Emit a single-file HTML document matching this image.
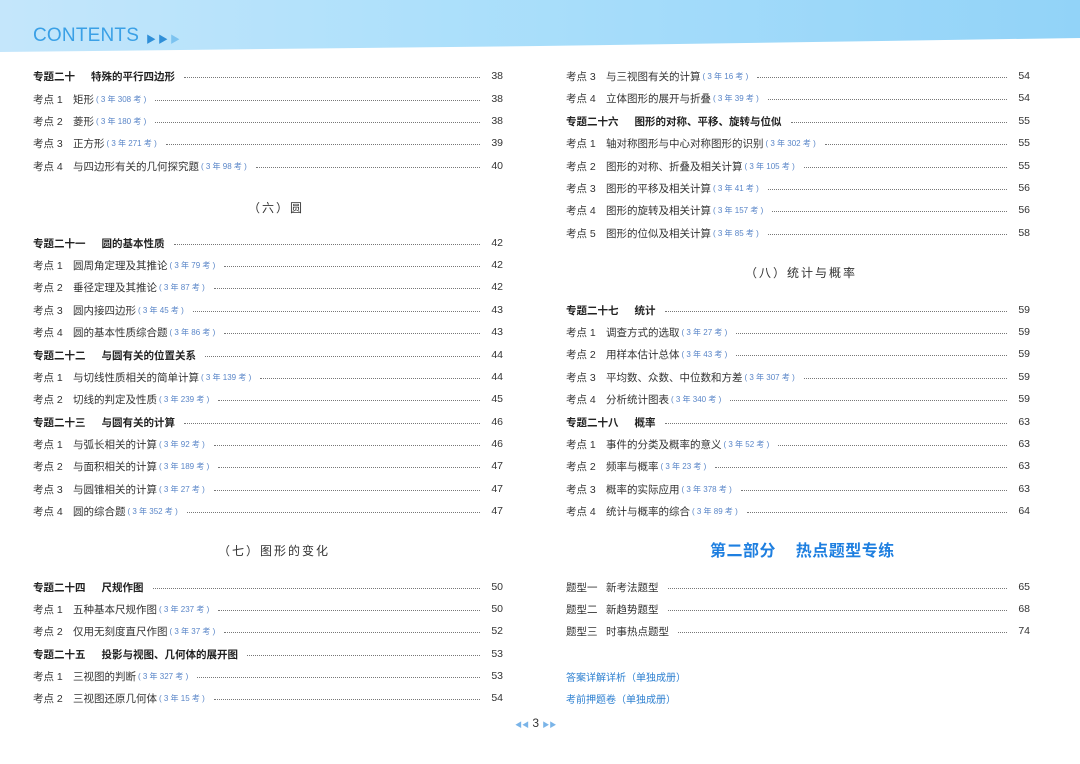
<!DOCTYPE html>
<html><head><meta charset="utf-8"><style>
body{margin:0;width:1080px;height:764px;background:#fff;position:relative;overflow:hidden;font-family:"Liberation Sans","Noto Sans CJK SC",sans-serif;color:#333}
.hdr{position:absolute;left:0;top:0;width:1080px;height:52px;background:linear-gradient(90deg,#c4e6fb 0%,#ade0fb 40%,#92d3f8 100%);clip-path:polygon(0 0,1080px 0,1080px 38px,540px 46px,0 52px)}
.ct{position:absolute;left:33px;top:25px;font-size:19px;color:#3aa0e6;letter-spacing:0.2px}
.ar{position:absolute;top:31px;font-size:10px;color:#2f8fd8}
.r{position:absolute;height:16px;display:flex;align-items:center;font-size:10.5px;white-space:nowrap}
.r b{font-weight:bold;color:#222}
.r .k{display:inline-block;width:40px}
.r .kb{display:inline-block;margin-right:16px;font-weight:bold;color:#222}
.n{color:#5a86c8;font-size:8px;margin-left:2px}
.d{flex:1;border-bottom:1px dotted #777;margin:0 9px 0 9px;height:0;position:relative;top:1px}
.p{width:14px;text-align:right;font-size:10.5px}
.sec{position:absolute;font-size:12px;letter-spacing:2px;color:#333}
.L{left:33px;width:470px}.R{left:566px;width:464px}
.bl{position:absolute;left:566px;font-size:10px;color:#2c7fd0}
</style></head><body>
<div class="hdr"></div>
<div class="ct">CONTENTS</div>
<div class="ar" style="left:146px">▶</div><div class="ar" style="left:158px">▶</div><div class="ar" style="left:170px;color:#7cc3f0">▶</div>

<div class="sec" style="left:248px;top:199px">（六）圆</div>
<div class="sec" style="left:218px;top:542px">（七）图形的变化</div>
<div class="sec" style="left:745px;top:264px">（八）统计与概率</div>
<div style="position:absolute;left:710px;top:537px;font-size:16px;font-weight:bold;color:#1e7fe0;letter-spacing:0.5px">第二部分&nbsp;&nbsp;&nbsp; 热点题型专练</div>
<div class="bl" style="top:669px">答案详解详析（单独成册）</div>
<div class="bl" style="top:691px">考前押题卷（单独成册）</div>
<div style="position:absolute;left:515px;top:716px;font-size:12px;color:#333"><span style="font-size:7px;color:#7ab4e8">◀◀</span> 3 <span style="font-size:7px;color:#7ab4e8">▶▶</span></div>

<div class="r L" style="top:68px"><span class="kb">专题二十</span><b>特殊的平行四边形</b><span class="d"></span><span class="p">38</span></div>
<div class="r L" style="top:91px"><span class="k">考点 1</span>矩形<span class="n">( 3 年 308 考 )</span><span class="d"></span><span class="p">38</span></div>
<div class="r L" style="top:113px"><span class="k">考点 2</span>菱形<span class="n">( 3 年 180 考 )</span><span class="d"></span><span class="p">38</span></div>
<div class="r L" style="top:135px"><span class="k">考点 3</span>正方形<span class="n">( 3 年 271 考 )</span><span class="d"></span><span class="p">39</span></div>
<div class="r L" style="top:158px"><span class="k">考点 4</span>与四边形有关的几何探究题<span class="n">( 3 年 98 考 )</span><span class="d"></span><span class="p">40</span></div>
<div class="r L" style="top:235px"><span class="kb">专题二十一</span><b>圆的基本性质</b><span class="d"></span><span class="p">42</span></div>
<div class="r L" style="top:257px"><span class="k">考点 1</span>圆周角定理及其推论<span class="n">( 3 年 79 考 )</span><span class="d"></span><span class="p">42</span></div>
<div class="r L" style="top:279px"><span class="k">考点 2</span>垂径定理及其推论<span class="n">( 3 年 87 考 )</span><span class="d"></span><span class="p">42</span></div>
<div class="r L" style="top:302px"><span class="k">考点 3</span>圆内接四边形<span class="n">( 3 年 45 考 )</span><span class="d"></span><span class="p">43</span></div>
<div class="r L" style="top:324px"><span class="k">考点 4</span>圆的基本性质综合题<span class="n">( 3 年 86 考 )</span><span class="d"></span><span class="p">43</span></div>
<div class="r L" style="top:347px"><span class="kb">专题二十二</span><b>与圆有关的位置关系</b><span class="d"></span><span class="p">44</span></div>
<div class="r L" style="top:369px"><span class="k">考点 1</span>与切线性质相关的简单计算<span class="n">( 3 年 139 考 )</span><span class="d"></span><span class="p">44</span></div>
<div class="r L" style="top:391px"><span class="k">考点 2</span>切线的判定及性质<span class="n">( 3 年 239 考 )</span><span class="d"></span><span class="p">45</span></div>
<div class="r L" style="top:414px"><span class="kb">专题二十三</span><b>与圆有关的计算</b><span class="d"></span><span class="p">46</span></div>
<div class="r L" style="top:436px"><span class="k">考点 1</span>与弧长相关的计算<span class="n">( 3 年 92 考 )</span><span class="d"></span><span class="p">46</span></div>
<div class="r L" style="top:458px"><span class="k">考点 2</span>与面积相关的计算<span class="n">( 3 年 189 考 )</span><span class="d"></span><span class="p">47</span></div>
<div class="r L" style="top:481px"><span class="k">考点 3</span>与圆锥相关的计算<span class="n">( 3 年 27 考 )</span><span class="d"></span><span class="p">47</span></div>
<div class="r L" style="top:503px"><span class="k">考点 4</span>圆的综合题<span class="n">( 3 年 352 考 )</span><span class="d"></span><span class="p">47</span></div>
<div class="r L" style="top:579px"><span class="kb">专题二十四</span><b>尺规作图</b><span class="d"></span><span class="p">50</span></div>
<div class="r L" style="top:601px"><span class="k">考点 1</span>五种基本尺规作图<span class="n">( 3 年 237 考 )</span><span class="d"></span><span class="p">50</span></div>
<div class="r L" style="top:623px"><span class="k">考点 2</span>仅用无刻度直尺作图<span class="n">( 3 年 37 考 )</span><span class="d"></span><span class="p">52</span></div>
<div class="r L" style="top:646px"><span class="kb">专题二十五</span><b>投影与视图、几何体的展开图</b><span class="d"></span><span class="p">53</span></div>
<div class="r L" style="top:668px"><span class="k">考点 1</span>三视图的判断<span class="n">( 3 年 327 考 )</span><span class="d"></span><span class="p">53</span></div>
<div class="r L" style="top:690px"><span class="k">考点 2</span>三视图还原几何体<span class="n">( 3 年 15 考 )</span><span class="d"></span><span class="p">54</span></div>

<div class="r R" style="top:68px"><span class="k">考点 3</span>与三视图有关的计算<span class="n">( 3 年 16 考 )</span><span class="d"></span><span class="p">54</span></div>
<div class="r R" style="top:90px"><span class="k">考点 4</span>立体图形的展开与折叠<span class="n">( 3 年 39 考 )</span><span class="d"></span><span class="p">54</span></div>
<div class="r R" style="top:113px"><span class="kb">专题二十六</span><b>图形的对称、平移、旋转与位似</b><span class="d"></span><span class="p">55</span></div>
<div class="r R" style="top:135px"><span class="k">考点 1</span>轴对称图形与中心对称图形的识别<span class="n">( 3 年 302 考 )</span><span class="d"></span><span class="p">55</span></div>
<div class="r R" style="top:158px"><span class="k">考点 2</span>图形的对称、折叠及相关计算<span class="n">( 3 年 105 考 )</span><span class="d"></span><span class="p">55</span></div>
<div class="r R" style="top:180px"><span class="k">考点 3</span>图形的平移及相关计算<span class="n">( 3 年 41 考 )</span><span class="d"></span><span class="p">56</span></div>
<div class="r R" style="top:202px"><span class="k">考点 4</span>图形的旋转及相关计算<span class="n">( 3 年 157 考 )</span><span class="d"></span><span class="p">56</span></div>
<div class="r R" style="top:225px"><span class="k">考点 5</span>图形的位似及相关计算<span class="n">( 3 年 85 考 )</span><span class="d"></span><span class="p">58</span></div>
<div class="r R" style="top:302px"><span class="kb">专题二十七</span><b>统计</b><span class="d"></span><span class="p">59</span></div>
<div class="r R" style="top:324px"><span class="k">考点 1</span>调查方式的选取<span class="n">( 3 年 27 考 )</span><span class="d"></span><span class="p">59</span></div>
<div class="r R" style="top:346px"><span class="k">考点 2</span>用样本估计总体<span class="n">( 3 年 43 考 )</span><span class="d"></span><span class="p">59</span></div>
<div class="r R" style="top:369px"><span class="k">考点 3</span>平均数、众数、中位数和方差<span class="n">( 3 年 307 考 )</span><span class="d"></span><span class="p">59</span></div>
<div class="r R" style="top:391px"><span class="k">考点 4</span>分析统计图表<span class="n">( 3 年 340 考 )</span><span class="d"></span><span class="p">59</span></div>
<div class="r R" style="top:414px"><span class="kb">专题二十八</span><b>概率</b><span class="d"></span><span class="p">63</span></div>
<div class="r R" style="top:436px"><span class="k">考点 1</span>事件的分类及概率的意义<span class="n">( 3 年 52 考 )</span><span class="d"></span><span class="p">63</span></div>
<div class="r R" style="top:458px"><span class="k">考点 2</span>频率与概率<span class="n">( 3 年 23 考 )</span><span class="d"></span><span class="p">63</span></div>
<div class="r R" style="top:481px"><span class="k">考点 3</span>概率的实际应用<span class="n">( 3 年 378 考 )</span><span class="d"></span><span class="p">63</span></div>
<div class="r R" style="top:503px"><span class="k">考点 4</span>统计与概率的综合<span class="n">( 3 年 89 考 )</span><span class="d"></span><span class="p">64</span></div>
<div class="r R" style="top:579px"><span class="k" style="width:40px">题型一</span>新考法题型<span class="d"></span><span class="p">65</span></div>
<div class="r R" style="top:601px"><span class="k" style="width:40px">题型二</span>新趋势题型<span class="d"></span><span class="p">68</span></div>
<div class="r R" style="top:623px"><span class="k" style="width:40px">题型三</span>时事热点题型<span class="d"></span><span class="p">74</span></div>
</body></html>
